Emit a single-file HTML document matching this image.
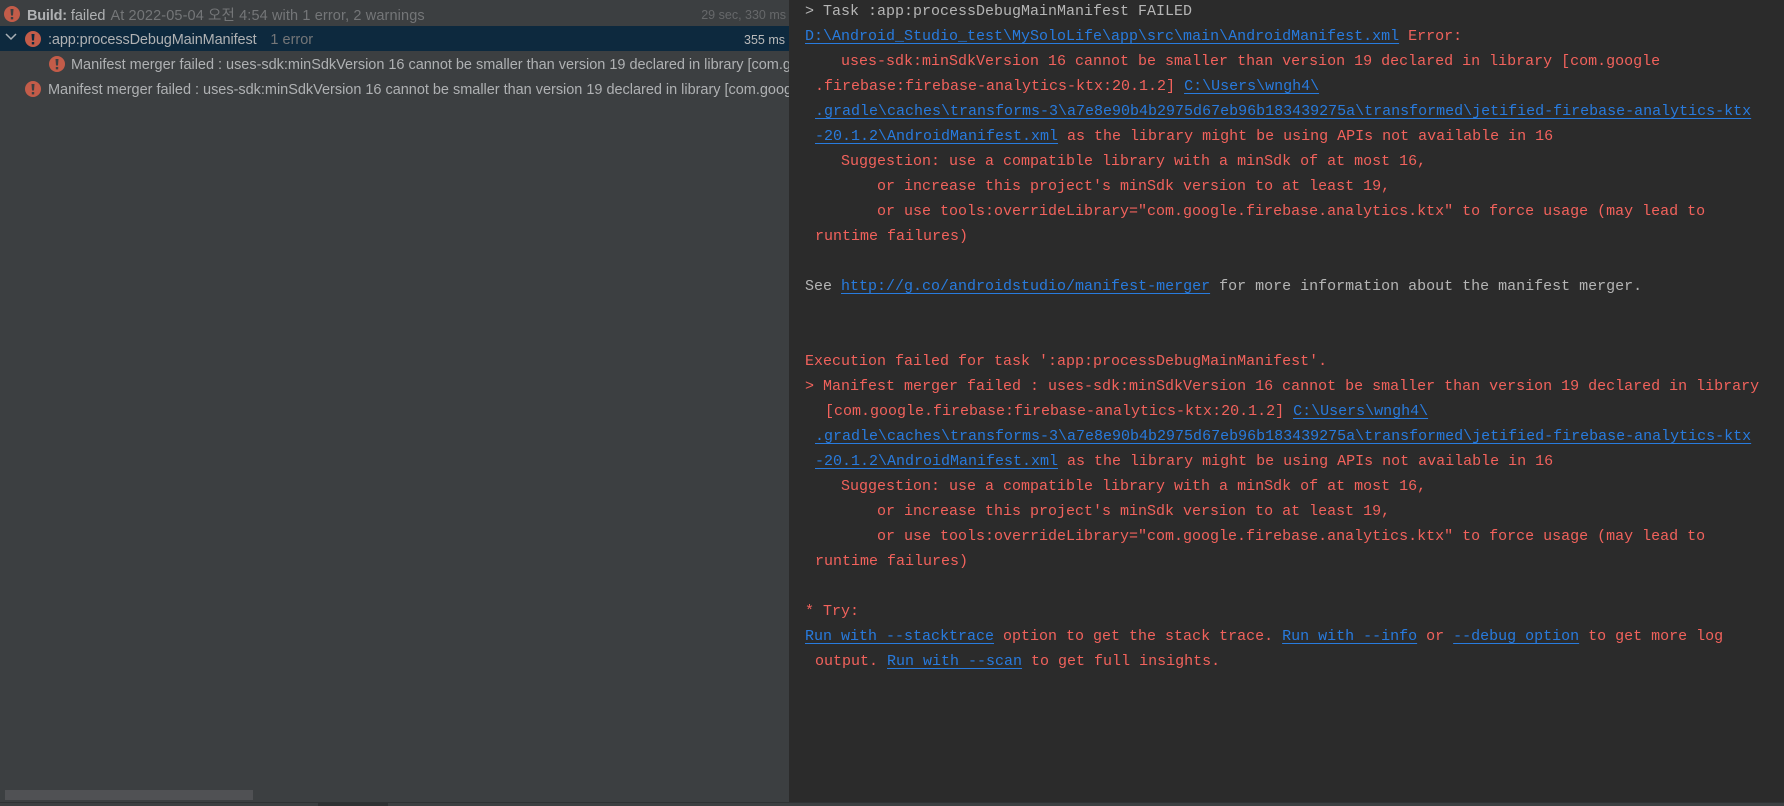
<!DOCTYPE html>
<html><head><meta charset="utf-8"><style>
html,body{margin:0;padding:0;width:1784px;height:806px;overflow:hidden;background:#3c3f41}
#l{position:absolute;left:0;top:0;width:789px;height:802px;overflow:hidden;background:#3c3f41;font:14.5px/25px "Liberation Sans","Noto Sans CJK KR",sans-serif;color:#afb1b3}
#sel{position:absolute;left:0;top:26px;width:789px;height:25px;background:#0d293e}
.t{position:absolute;white-space:nowrap;letter-spacing:-.02px}
.g{color:#747678}
.d{font-size:12.5px;letter-spacing:0}
svg{position:absolute}
#r{position:absolute;left:789px;top:0;width:995px;height:802px;background:#2b2b2b;overflow:hidden}
#r div{position:absolute;white-space:pre;font:15px/25px "Liberation Mono",monospace;color:#f2625c;left:16px}
#r .w{color:#b5b5b5}
#r u{color:#287bde;text-decoration:underline;text-decoration-thickness:1px;text-underline-offset:3px}
#sb{position:absolute;left:5px;top:790px;width:248px;height:10px;background:#505154}
#bt{position:absolute;left:0;top:802px;width:1784px;height:1px;background:#2f3133}
#bd{position:absolute;left:318px;top:803px;width:70px;height:3px;background:#2f3133}
</style></head><body>
<div id="l">
<div id="sel"></div>
<svg style="left:4px;top:6px" width="16" height="16" viewBox="0 0 16 16"><circle cx="8" cy="8" r="8" fill="#c35c49"/><path d="M6.500 3h3l-.5 6.500H7zM6.800 11h2.400v2.400H6.800z" fill="#3c3f41"/></svg>
<div class="t" style="left:27px;top:4px"><b style="letter-spacing:-.2px">Build:</b> failed <span class="g" style="letter-spacing:.12px;margin-left:1px">At 2022-05-04 오전 4:54 with 1 error, 2 warnings</span></div>
<div class="t d" style="right:3px;top:3px;color:#66686a">29 sec, 330 ms</div>
<svg style="left:5px;top:33px" width="12" height="8" viewBox="0 0 12 8"><path d="M1 1l5 5 5-5" fill="none" stroke="#a9b0b6" stroke-width="1.500"/></svg>
<svg style="left:25px;top:31px" width="16" height="16" viewBox="0 0 16 16"><circle cx="8" cy="8" r="8" fill="#c35c49"/><path d="M6.500 3h3l-.5 6.500H7zM6.800 11h2.400v2.400H6.800z" fill="#0d293e"/></svg>
<div class="t" style="left:48px;top:28px;letter-spacing:-.12px">:app:processDebugMainManifest <span class="g" style="margin-left:10px;letter-spacing:0">1 error</span></div>
<div class="t d" style="right:4px;top:28px;color:#bbb">355 ms</div>
<svg style="left:49px;top:56px" width="16" height="16" viewBox="0 0 16 16"><circle cx="8" cy="8" r="8" fill="#c35c49"/><path d="M6.500 3h3l-.5 6.500H7zM6.800 11h2.400v2.400H6.800z" fill="#3c3f41"/></svg>
<div class="t" style="left:71px;top:53px">Manifest merger failed : uses-sdk:minSdkVersion 16 cannot be smaller than version 19 declared in library [com.google.firebase:firebase-analytics-ktx:20.1.2]</div>
<svg style="left:25px;top:81px" width="16" height="16" viewBox="0 0 16 16"><circle cx="8" cy="8" r="8" fill="#c35c49"/><path d="M6.500 3h3l-.5 6.500H7zM6.800 11h2.400v2.400H6.800z" fill="#3c3f41"/></svg>
<div class="t" style="left:48px;top:78px">Manifest merger failed : uses-sdk:minSdkVersion 16 cannot be smaller than version 19 declared in library [com.google.firebase:firebase-analytics-ktx:20.1.2]</div>
</div>
<div id="sb"></div>
<div id="r">
<div class="w" style="top:-1px">&gt; Task :app:processDebugMainManifest FAILED</div>
<div style="top:24px"><u>D:\Android_Studio_test\MySoloLife\app\src\main\AndroidManifest.xml</u> Error:</div>
<div style="top:49px;left:52px">uses-sdk:minSdkVersion 16 cannot be smaller than version 19 declared in library [com.google</div>
<div style="top:74px;left:26px">.firebase:firebase-analytics-ktx:20.1.2] <u>C:\Users\wngh4\</u></div>
<div style="top:99px;left:26px"><u>.gradle\caches\transforms-3\a7e8e90b4b2975d67eb96b183439275a\transformed\jetified-firebase-analytics-ktx</u></div>
<div style="top:124px;left:26px"><u>-20.1.2\AndroidManifest.xml</u> as the library might be using APIs not available in 16</div>
<div style="top:149px;left:52px">Suggestion: use a compatible library with a minSdk of at most 16,</div>
<div style="top:174px;left:88px">or increase this project's minSdk version to at least 19,</div>
<div style="top:199px;left:88px">or use tools:overrideLibrary="com.google.firebase.analytics.ktx" to force usage (may lead to</div>
<div style="top:224px;left:26px">runtime failures)</div>
<div class="w" style="top:274px">See <u>http://g.co/androidstudio/manifest-merger</u> for more information about the manifest merger.</div>
<div style="top:349px">Execution failed for task ':app:processDebugMainManifest'.</div>
<div style="top:374px">&gt; Manifest merger failed : uses-sdk:minSdkVersion 16 cannot be smaller than version 19 declared in library</div>
<div style="top:399px;left:36px">[com.google.firebase:firebase-analytics-ktx:20.1.2] <u>C:\Users\wngh4\</u></div>
<div style="top:424px;left:26px"><u>.gradle\caches\transforms-3\a7e8e90b4b2975d67eb96b183439275a\transformed\jetified-firebase-analytics-ktx</u></div>
<div style="top:449px;left:26px"><u>-20.1.2\AndroidManifest.xml</u> as the library might be using APIs not available in 16</div>
<div style="top:474px;left:52px">Suggestion: use a compatible library with a minSdk of at most 16,</div>
<div style="top:499px;left:88px">or increase this project's minSdk version to at least 19,</div>
<div style="top:524px;left:88px">or use tools:overrideLibrary="com.google.firebase.analytics.ktx" to force usage (may lead to</div>
<div style="top:549px;left:26px">runtime failures)</div>
<div style="top:599px">* Try:</div>
<div style="top:624px"><u>Run with --stacktrace</u> option to get the stack trace. <u>Run with --info</u> or <u>--debug option</u> to get more log</div>
<div style="top:649px;left:26px">output. <u>Run with --scan</u> to get full insights.</div>
</div>
<div id="bt"></div><div id="bd"></div>
</body></html>
